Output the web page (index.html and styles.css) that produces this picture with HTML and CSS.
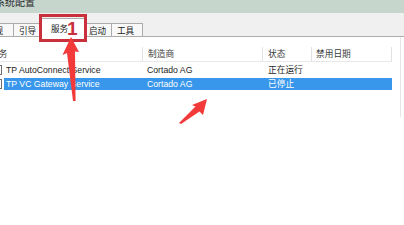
FILE: index.html
```html
<!DOCTYPE html>
<html lang="zh-CN">
<head>
<meta charset="utf-8">
<title>系统配置</title>
<link rel="stylesheet" href="styles.css">
</head>
<body>
<div class="titlebar"><span class="title">系统配置</span></div>
<div class="tabstrip">
  <div class="tab t0">常规</div>
  <div class="tab t1">引导</div>
  <div class="tab active">服务</div>
  <div class="tab t3">启动</div>
  <div class="tab t4">工具</div>
</div>
<div class="list">
  <div class="row head">
    <div class="sp"></div>
    <div class="c c1">服务</div>
    <div class="c c2">制造商</div>
    <div class="c c3">状态</div>
    <div class="c c4">禁用日期</div>
  </div>
  <div class="row item first">
    <div class="sp"><span class="cb"></span></div>
    <div class="c c1">TP AutoConnect Service</div>
    <div class="c c2">Cortado AG</div>
    <div class="c c3">正在运行</div>
    <div class="c c4"></div>
  </div>
  <div class="row item sel">
    <div class="sp"><span class="cb"></span></div>
    <div class="c c1">TP VC Gateway Service</div>
    <div class="c c2">Cortado AG</div>
    <div class="c c3">已停止</div>
    <div class="c c4"></div>
  </div>
</div>
<div class="mark"><span class="num">1</span></div>
<svg class="arrows" width="404" height="225" viewBox="0 0 404 225">
  <polygon fill="#f23a3a" points="71,37 79,52 75,51.5 75.6,101 73,101 67,53 62.5,55"/>
  <polygon fill="#f23a3a" points="207,99 203,115 199.5,111.5 181,124 179,123 195.5,106.5 192,105"/>
</svg>
</body>
</html>
```
FILE: styles.css
```css
html, body {
  margin: 0;
  padding: 0;
}
body {
  width: 404px;
  height: 225px;
  overflow: hidden;
  position: relative;
  background: #ffffff;
  font-family: "Liberation Sans", "Noto Sans CJK SC", sans-serif;
  font-size: 8.7px;
  color: #1e1e1e;
}
.titlebar {
  height: 13px;
  background: #c6d6cd;
  overflow: hidden;
}
.title {
  display: block;
  font-family: "Noto Sans CJK SC", sans-serif;
  font-size: 10px;
  line-height: 10px;
  margin: -3px 0 0 -5px;
  color: #2b2b2b;
  white-space: nowrap;
}
.tabstrip {
  height: 23px;
  background: #f0f0f0;
  border-bottom: 1px solid #acacac;
  display: flex;
  align-items: flex-end;
}
.tab {
  box-sizing: border-box;
  height: 13px;
  border: 1px solid #acacac;
  border-right: none;
  border-bottom: none;
  background: #f8f8f8;
  padding-left: 5px;
  line-height: 12px;
  white-space: nowrap;
  overflow: hidden;
  font-family: "Noto Sans CJK SC", sans-serif;
  font-size: 8.6px;
  color: #222;
  flex: none;
}
.t0 { width: 33px; margin-left: -20px; }
.t1 { width: 29px; }
.active {
  width: 46px;
  height: 19px;
  margin: 0 -2px -1px -2px;
  padding-left: 10px;
  line-height: 18px;
  background: #ffffff;
  border-right: 1px solid #acacac;
  position: relative;
  z-index: 1;
}
.t3 { width: 27px; padding-left: 4px; }
.t4 { width: 32px; border-right: 1px solid #acacac; }

.list {
  box-sizing: border-box;
  width: 401px;
  height: 80px;
  padding-top: 10px;
  border-right: 1px solid #e6e6e6;
}
.row {
  display: grid;
  grid-template-columns: 4px 139px 120px 49px 80px;
  width: 392px;
  height: 14px;
  line-height: 14px;
  white-space: nowrap;
}
.head {
  color: #3a3a3a;
  border-bottom: 1px solid #e8e8e8;
  width: 392px;
}
.head .c {
  border-right: 1px solid #e2e2e2;
}
.head .c1 { text-indent: -16px; }
.c { overflow: visible; }
.c1 { padding-left: 2px; }
.c2 { padding-left: 4px; }
.c3 { padding-left: 5px; }
.c4 { padding-left: 4px; }
.head .c2 { padding-left: 5px; }
.item.first { margin-top: 1px; }
.cb {
  display: block;
  box-sizing: border-box;
  width: 10px;
  height: 10px;
  margin: 2px 0 0 -8px;
  border: 1px solid #707070;
  background: #fff;
}
.sel .c {
  background: #3897ea;
  color: #ffffff;
  margin: 1px 0;
  line-height: 12px;
}
.mark {
  position: absolute;
  left: 39px;
  top: 14px;
  width: 42px;
  height: 22px;
  border: 3px solid #c9303b;
  z-index: 2;
}
.num {
  position: absolute;
  left: 25px;
  top: 2px;
  font-family: "Liberation Sans", sans-serif;
  font-weight: bold;
  font-size: 19px;
  line-height: 19px;
  color: #c9303b;
}
.arrows {
  position: absolute;
  left: 0;
  top: 0;
  z-index: 3;
  pointer-events: none;
}
```
